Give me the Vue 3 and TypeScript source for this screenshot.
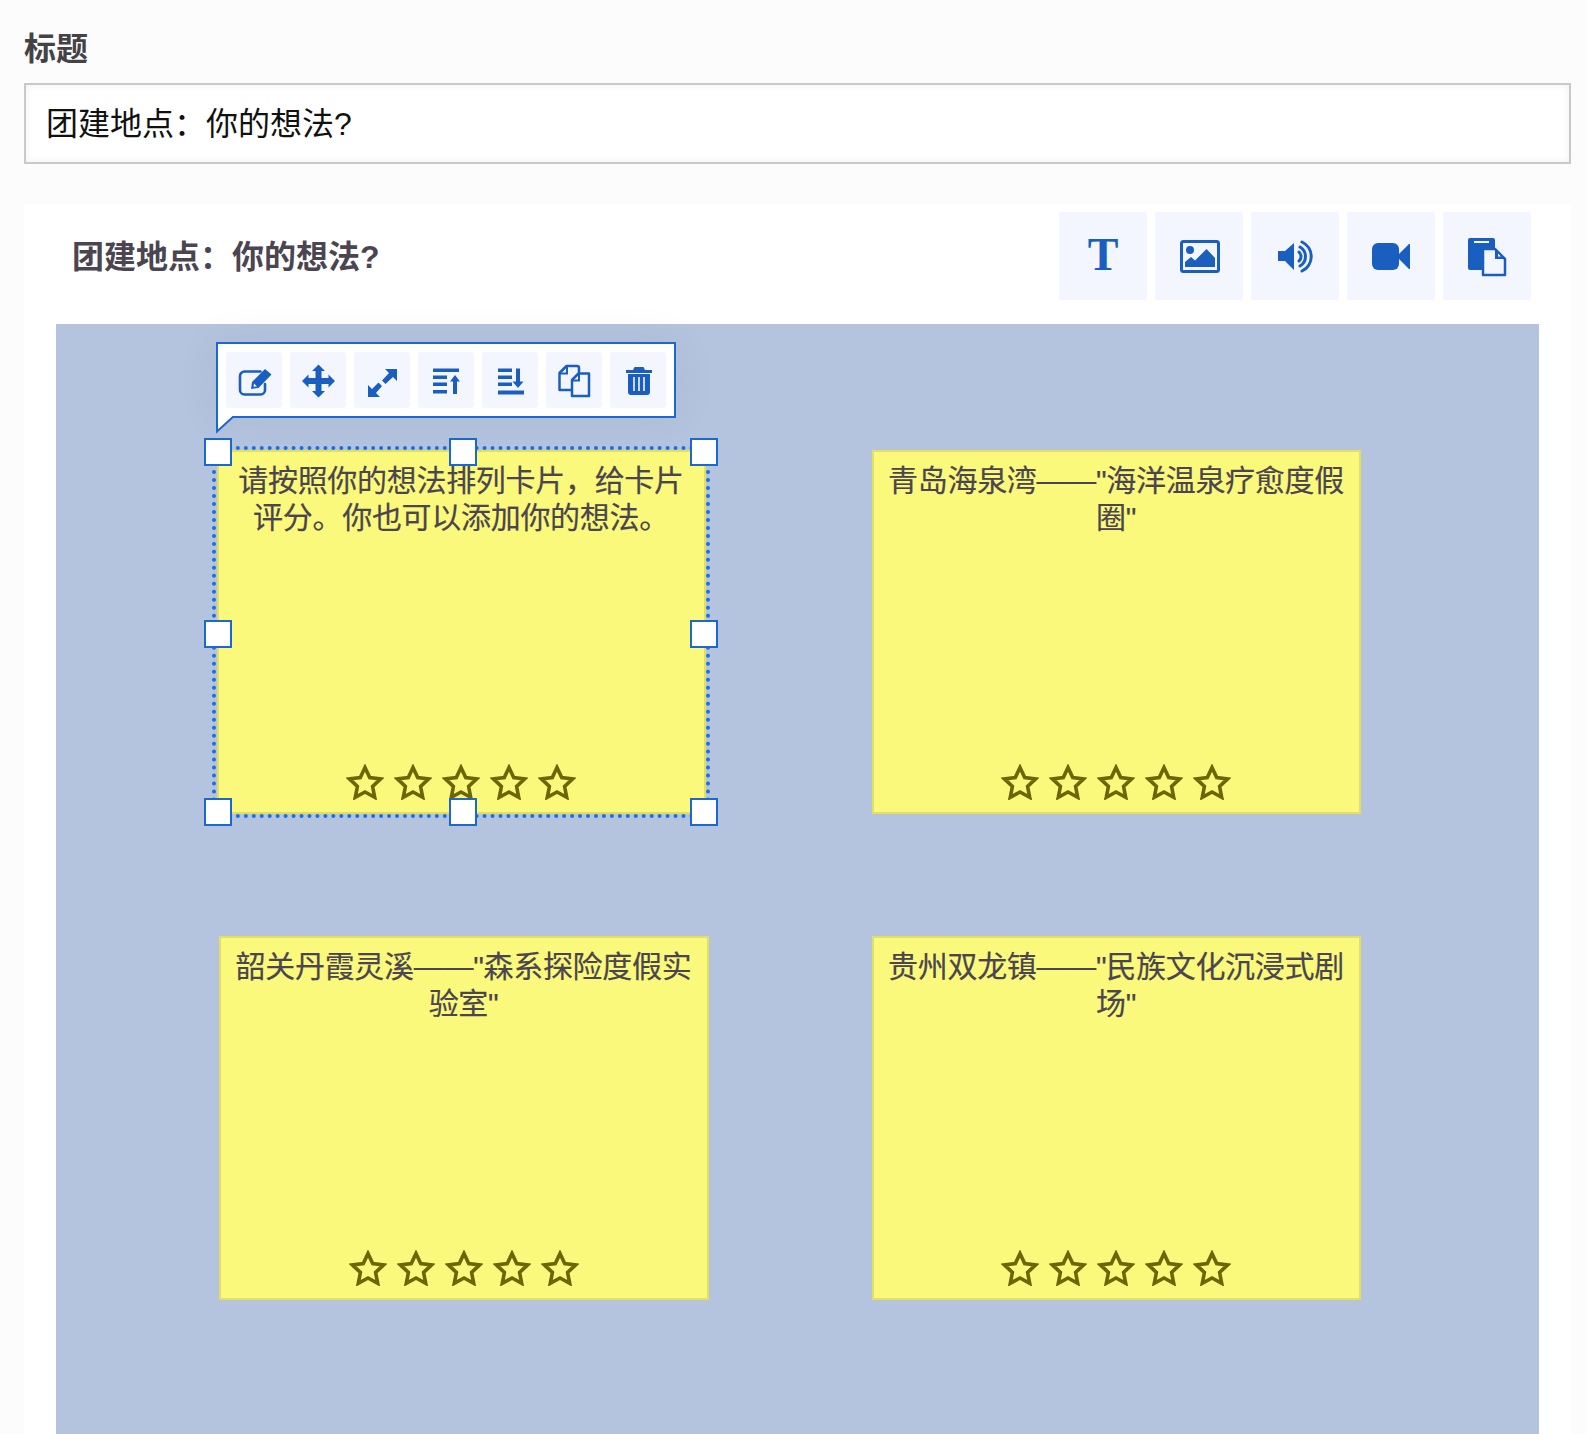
<script setup lang="ts">
interface Card { id: number; text: string; left: number; top: number; width: number }
const cards: Card[] = [
  { id: 1, text: '请按照你的想法排列卡片，给卡片评分。你也可以添加你的想法。', left: 161, top: 126, width: 489 },
  { id: 2, text: '青岛海泉湾——"海洋温泉疗愈度假圈"', left: 816, top: 126, width: 489 },
  { id: 3, text: '韶关丹霞灵溪——"森系探险度假实验室"', left: 163, top: 612, width: 490 },
  { id: 4, text: '贵州双龙镇——"民族文化沉浸式剧场"', left: 816, top: 612, width: 489 },
]
const stars = [1, 2, 3, 4, 5]
const handles = ['tl', 'tm', 'tr', 'ml', 'mr', 'bl', 'bm', 'br']
</script>

<template>
  <div class="page">
    <div class="label">标题</div>
    <div class="input">团建地点：你的想法?</div>
    <section class="panel">
      <header class="head">
        <h2 class="title">团建地点：你的想法?</h2>
        <div class="tools">
          <button class="tool"><span class="t-glyph">T</span></button>
          <button class="tool">
            <svg class="ic44" viewBox="-1 0 44 44">
              <rect x="3.5" y="7.5" width="37" height="30" rx="2" fill="none" stroke="currentColor" stroke-width="3" />
              <circle cx="12" cy="16" r="4" fill="currentColor" />
              <path d="M7 33V28L13 23L17 26.5L28.5 15L37 24V33Z" fill="currentColor" />
            </svg>
          </button>
          <button class="tool">
            <svg class="ic44" viewBox="0 0 44 44">
              <path d="M5 17H12L21 9V36L12 27H5Z" fill="currentColor" />
              <path d="M26 18A6 6 0 0 1 26 27" fill="none" stroke="currentColor" stroke-width="3" stroke-linecap="round" />
              <path d="M27 13A11 11 0 0 1 27 32" fill="none" stroke="currentColor" stroke-width="3" stroke-linecap="round" />
              <path d="M29 8A16 16 0 0 1 29 37" fill="none" stroke="currentColor" stroke-width="3" stroke-linecap="round" />
            </svg>
          </button>
          <button class="tool">
            <svg class="ic44" viewBox="0 0 44 44">
              <rect x="3" y="9" width="27" height="27" rx="6" fill="currentColor" />
              <path d="M30 20L40 10H41V35H40L30 25Z" fill="currentColor" />
            </svg>
          </button>
          <button class="tool">
            <svg class="ic44" viewBox="0 0 44 44">
              <path d="M5 4H28A2 2 0 0 1 30 6V36H5A2 2 0 0 1 3 34V6A2 2 0 0 1 5 4Z" fill="currentColor" />
              <rect x="9" y="7" width="15" height="2" fill="#f3f6fe" />
              <path d="M18 41V15H30L40 25V41Z" fill="#f3f6fe" stroke="currentColor" stroke-width="2.5" stroke-linejoin="round" />
              <path d="M30 15V25H40Z" fill="currentColor" />
              <path d="M33 19.5V22.5H36Z" fill="#f3f6fe" />
            </svg>
          </button>
        </div>
      </header>

      <div class="canvas">
        <article v-for="c in cards" :key="c.id" class="card" :style="{ left: c.left + 'px', top: c.top + 'px', width: c.width + 'px' }">
          <p class="text">{{ c.text }}</p>
          <div class="stars">
            <svg v-for="s in stars" :key="s" class="star" viewBox="0 0 38 36">
              <path d="M19 3.5L23.7 13.5L34.6 14.9L26.6 22.5L28.7 33.3L19 28L9.3 33.3L11.4 22.5L3.4 14.9L14.3 13.5Z" />
            </svg>
          </div>
        </article>

        <div class="selection">
          <div class="dots"></div>
          <span v-for="h in handles" :key="h" class="handle" :class="h"></span>
        </div>

        <div class="toolbar">
          <button class="mini">
            <svg class="ic36" viewBox="-1.5 0 36 36">
              <path d="M23 9.5H7A4.5 4.5 0 0 0 2.5 14V28A4.5 4.5 0 0 0 7 32.5H23A4.5 4.5 0 0 0 27.5 28V22" fill="none" stroke="currentColor" stroke-width="2.6" stroke-linecap="round" />
              <path d="M13.5 27L14.5 20L27.5 7L34 12.5L21 26Z" fill="currentColor" />
              <path d="M16 24.8L16.5 21.5L19.5 24.4Z" fill="#f3f6fe" />
            </svg>
          </button>
          <button class="mini">
            <svg class="ic36 tall" viewBox="0 0 36 40">
              <path d="M18.5 4.5L25 11H21.5V18H28.5V14.5L35 21L28.5 27.5V24H21.5V31H25L18.5 37.5L12 31H15.5V24H8.5V27.5L2 21L8.5 14.5V18H15.5V11H12Z" fill="currentColor" />
            </svg>
          </button>
          <button class="mini">
            <svg class="ic36" viewBox="0 0 36 36">
              <path d="M21 7H33V19L29 15L21.5 22L18 18.5L25 11Z" fill="currentColor" />
              <path d="M16 35H4V23L8 27L14.5 20.5L18 24L12 31Z" fill="currentColor" />
            </svg>
          </button>
          <button class="mini">
            <svg class="ic36" viewBox="0 0 36 36">
              <path d="M5 6.5H31V10H5ZM5 13.5H19V17H5ZM5 20.5H19V24H5ZM5 28H19V31.5H5Z" fill="currentColor" />
              <path d="M27 13L32 19.5H29V32H25V19.5H22Z" fill="currentColor" />
            </svg>
          </button>
          <button class="mini">
            <svg class="ic36" viewBox="0 0 36 36">
              <path d="M6 6.5H20V10H6ZM6 13.5H20V17H6ZM6 20.5H20V24H6ZM6 28.5H32V32.5H6Z" fill="currentColor" />
              <path d="M24 6.5H28V19.5H31.5L26 26L20.5 19.5H24Z" fill="currentColor" />
            </svg>
          </button>
          <button class="mini">
            <svg class="ic36" viewBox="0 0 36 36">
              <path d="M15 28H3.5V11L10.5 4H21A2 2 0 0 1 23 6V11" fill="none" stroke="currentColor" stroke-width="2.5" stroke-linejoin="round" />
              <path d="M3.5 11.5H11V4" fill="none" stroke="currentColor" stroke-width="2" />
              <path d="M16 34V18L22.5 11.5H33V34Z" fill="#f3f6fe" stroke="currentColor" stroke-width="2.5" stroke-linejoin="round" />
              <path d="M16 18.5H23V11.5" fill="none" stroke="currentColor" stroke-width="2" />
            </svg>
          </button>
          <button class="mini">
            <svg class="ic36" viewBox="0 0 36 36">
              <path d="M6 8H13L14.5 5H23.5L25 8H32V11H6Z" fill="currentColor" />
              <path d="M8 12H30V30A3 3 0 0 1 27 33H11A3 3 0 0 1 8 30Z" fill="currentColor" />
              <path d="M13.2 15H14.8V29H13.2ZM18.2 15H19.8V29H18.2ZM23.2 15H24.8V29H23.2Z" fill="#f3f6fe" />
            </svg>
          </button>
          <svg class="tail" viewBox="0 0 20 18"><path d="M1 0V15.5L18 0" fill="#fff" stroke="#1c68d1" stroke-width="2" /></svg>
        </div>
      </div>
    </section>
  </div>
</template>

<style>
html, body { margin: 0; background: #fcfcfc; }
</style>

<style scoped>
.page {
  box-sizing: border-box;
  height: 1434px;
  overflow: hidden;
  padding: 29px 15px 0 24px;
  display: flex;
  flex-direction: column;
  background: #fcfcfc;
  font-family: "Liberation Sans", "Noto Sans CJK SC", sans-serif;
}
.label {
  font-size: 32px;
  line-height: 40px;
  font-weight: 700;
  color: #444247;
  margin-bottom: 14px;
}
.input {
  box-sizing: border-box;
  height: 81px;
  border: 2px solid #c9c9c9;
  padding: 0 20px;
  background: #fff;
  box-shadow: inset 0 0 8px rgba(0, 0, 0, 0.06);
  font-size: 32px;
  line-height: 78px;
  color: #111;
}
.panel {
  margin-top: 40px;
  flex: 1;
  min-height: 0;
  background: #fff;
  display: flex;
  flex-direction: column;
}
.head {
  display: flex;
  align-items: center;
  justify-content: space-between;
  padding: 8px 40px 24px 48px;
}
.title {
  margin: 0;
  padding-top: 2px;
  font-size: 32px;
  font-weight: 700;
  color: #4a4550;
  line-height: 86px;
}
.tools { display: flex; gap: 8px; }
.tool {
  width: 88px;
  height: 88px;
  border: 0;
  padding: 0;
  border-radius: 3px;
  background: #f3f6fe;
  color: #1a5fbf;
  display: flex;
  align-items: center;
  justify-content: center;
}
.t-glyph {
  font-family: "Liberation Serif", serif;
  font-size: 46px;
  font-weight: 700;
  line-height: 1;
  margin-top: -3px;
}
.ic44 { width: 44px; height: 44px; display: block; }
.canvas {
  position: relative;
  flex: 1;
  margin: 0 32px;
  background: #b4c4de;
}
.card {
  position: absolute;
  box-sizing: border-box;
  height: 364px;
  border: 2px solid #e2df63;
  background: #faf97b;
  padding: 10px 11px 12px 10px;
  display: flex;
  flex-direction: column;
  align-items: center;
}
.text {
  margin: 0;
  font-size: 30px;
  line-height: 37px;
  letter-spacing: -0.3px;
  color: #4a4550;
  text-align: center;
  width: 100%;
  -webkit-text-stroke: 0.2px #4a4550;
}
.stars { margin-top: auto; display: flex; gap: 10px; }
.star { width: 38px; height: 36px; display: block; }
.star path { fill: none; stroke: #6c6607; stroke-width: 3.6; stroke-linejoin: miter; }
.selection {
  position: absolute;
  left: 148px;
  top: 114px;
  width: 514px;
  height: 388px;
}
.dots {
  position: absolute;
  inset: 8px;
  border: 4px dotted #1c6fe0;
}
.handle {
  position: absolute;
  box-sizing: border-box;
  width: 28px;
  height: 28px;
  border: 2px solid #1c68d1;
  background: #fff;
}
.tl { left: 0; top: 0; }
.tm { left: 245px; top: 0; }
.tr { right: 0; top: 0; }
.ml { left: 0; top: 182px; }
.mr { right: 0; top: 182px; }
.bl { left: 0; bottom: 0; }
.bm { left: 245px; bottom: 0; }
.br { right: 0; bottom: 0; }
.toolbar {
  position: absolute;
  left: 160px;
  top: 18px;
  box-sizing: border-box;
  width: 460px;
  height: 76px;
  border: 2px solid #1c68d1;
  background: #fff;
  padding: 8px;
  display: flex;
  gap: 8px;
  box-shadow: 0 0 40px rgba(80, 80, 100, 0.08);
}
.mini {
  width: 56px;
  height: 56px;
  border: 0;
  padding: 0;
  border-radius: 3px;
  background: #f3f6fe;
  color: #1a5fbf;
  display: flex;
  align-items: center;
  justify-content: center;
}
.ic36 { width: 36px; height: 36px; display: block; overflow: visible; }
.ic36.tall { height: 40px; }
.tail {
  position: absolute;
  left: -2px;
  top: 72px;
  width: 20px;
  height: 18px;
}
</style>
